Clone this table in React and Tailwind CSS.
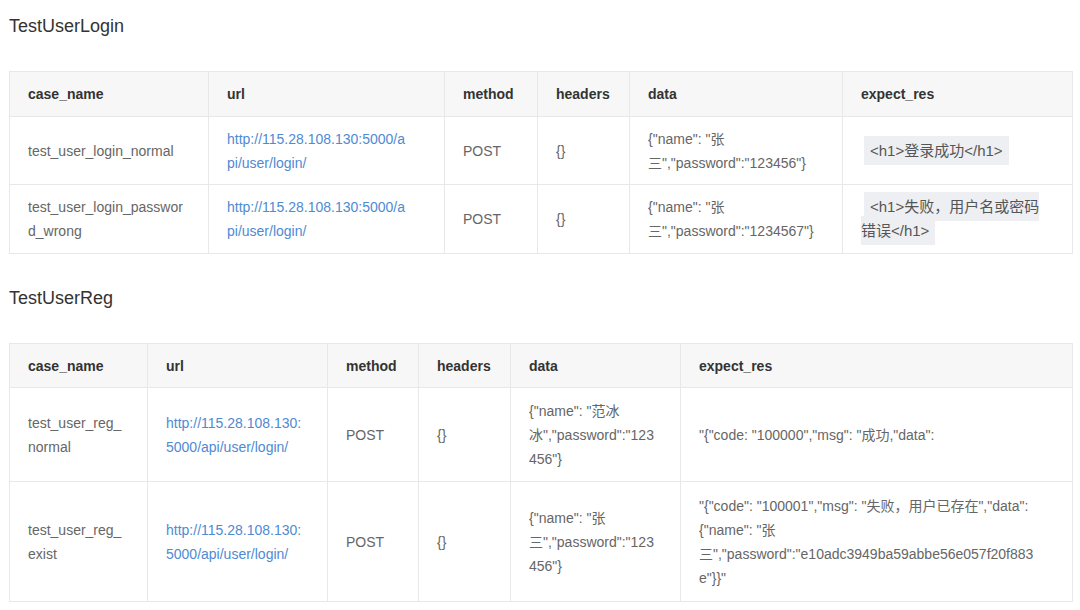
const HEADERS = ['case_name', 'url', 'method', 'headers', 'data', 'expect_res'];

// explicit line breaks so wrapping matches the original narrow columns
const Lines = ({ lines }) =>
  lines.map((l, i) => (
    <span key={i}>
      {i > 0 && <br />}
      {l}
    </span>
  ));

const Code = ({ lines }) => (
  <span className="ml-[3px] bg-[#edeff2] px-[6px] py-[6px] text-[15px] text-[#555]">
    <Lines lines={lines} />
  </span>
);

function CaseTable({ widths, rowHeights, rows }) {
  return (
    <table className="w-[1063px] table-fixed border-collapse border border-[#e8e8e8] text-[14px]">
      <colgroup>
        {widths.map((w, i) => (
          <col key={i} style={{ width: w }} />
        ))}
      </colgroup>
      <thead>
        <tr className="bg-[#f7f7f7]" style={{ height: rowHeights[0] }}>
          {HEADERS.map((h) => (
            <th
              key={h}
              className="border border-[#e8e8e8] px-[18px] text-left align-middle font-bold leading-6 text-[#333]"
            >
              {h}
            </th>
          ))}
        </tr>
      </thead>
      <tbody>
        {rows.map((r, i) => (
          <tr key={i} style={{ height: rowHeights[i + 1] }}>
            <td className="border border-[#e8e8e8] px-[18px] align-middle leading-6 text-[#666]">
              <Lines lines={r.name} />
            </td>
            <td className="border border-[#e8e8e8] px-[18px] align-middle leading-6 text-[#4f8ad3]">
              <Lines lines={r.url} />
            </td>
            <td className="border border-[#e8e8e8] px-[18px] align-middle leading-6 text-[#666]">POST</td>
            <td className="border border-[#e8e8e8] px-[18px] align-middle leading-6 text-[#666]">{'{}'}</td>
            <td className="border border-[#e8e8e8] px-[18px] align-middle leading-6 text-[#666]">
              <Lines lines={r.data} />
            </td>
            <td className="border border-[#e8e8e8] px-[18px] align-middle leading-6 text-[#666]">
              {r.code ? <Code lines={r.code} /> : <Lines lines={r.expect} />}
            </td>
          </tr>
        ))}
      </tbody>
    </table>
  );
}

const loginRows = [
  {
    name: ['test_user_login_normal'],
    url: ['http://115.28.108.130:5000/a', 'pi/user/login/'],
    data: ['{"name": "张', '三","password":"123456"}'],
    code: ['<h1>登录成功</h1>'],
  },
  {
    name: ['test_user_login_passwor', 'd_wrong'],
    url: ['http://115.28.108.130:5000/a', 'pi/user/login/'],
    data: ['{"name": "张', '三","password":"1234567"}'],
    code: ['<h1>失败，用户名或密码', '错误</h1>'],
  },
];

const regRows = [
  {
    name: ['test_user_reg_', 'normal'],
    url: ['http://115.28.108.130:', '5000/api/user/login/'],
    data: ['{"name": "范冰', '冰","password":"123', '456"}'],
    expect: ['"{"code: "100000","msg": "成功,"data":'],
  },
  {
    name: ['test_user_reg_', 'exist'],
    url: ['http://115.28.108.130:', '5000/api/user/login/'],
    data: ['{"name": "张', '三","password":"123', '456"}'],
    expect: [
      '"{"code": "100001","msg": "失败，用户已存在","data":',
      '{"name": "张',
      '三","password":"e10adc3949ba59abbe56e057f20f883',
      'e"}}"',
    ],
  },
];

export default function App() {
  return (
    <div className="min-h-[610px] w-[1080px] bg-white pl-[9px] pt-[14px] font-['Liberation_Sans','Noto_Sans_CJK_SC',sans-serif]">
      <h2 className="text-[18px] leading-6 text-[#333]">TestUserLogin</h2>
      <div className="mt-[33px]">
        <CaseTable widths={[199, 236, 93, 92, 213, 230]} rowHeights={[45, 68, 69]} rows={loginRows} />
      </div>
      <h2 className="mt-[32px] text-[18px] leading-6 text-[#333]">TestUserReg</h2>
      <div className="mt-[33px]">
        <CaseTable widths={[138, 180, 91, 92, 170, 392]} rowHeights={[44, 94, 120]} rows={regRows} />
      </div>
    </div>
  );
}
